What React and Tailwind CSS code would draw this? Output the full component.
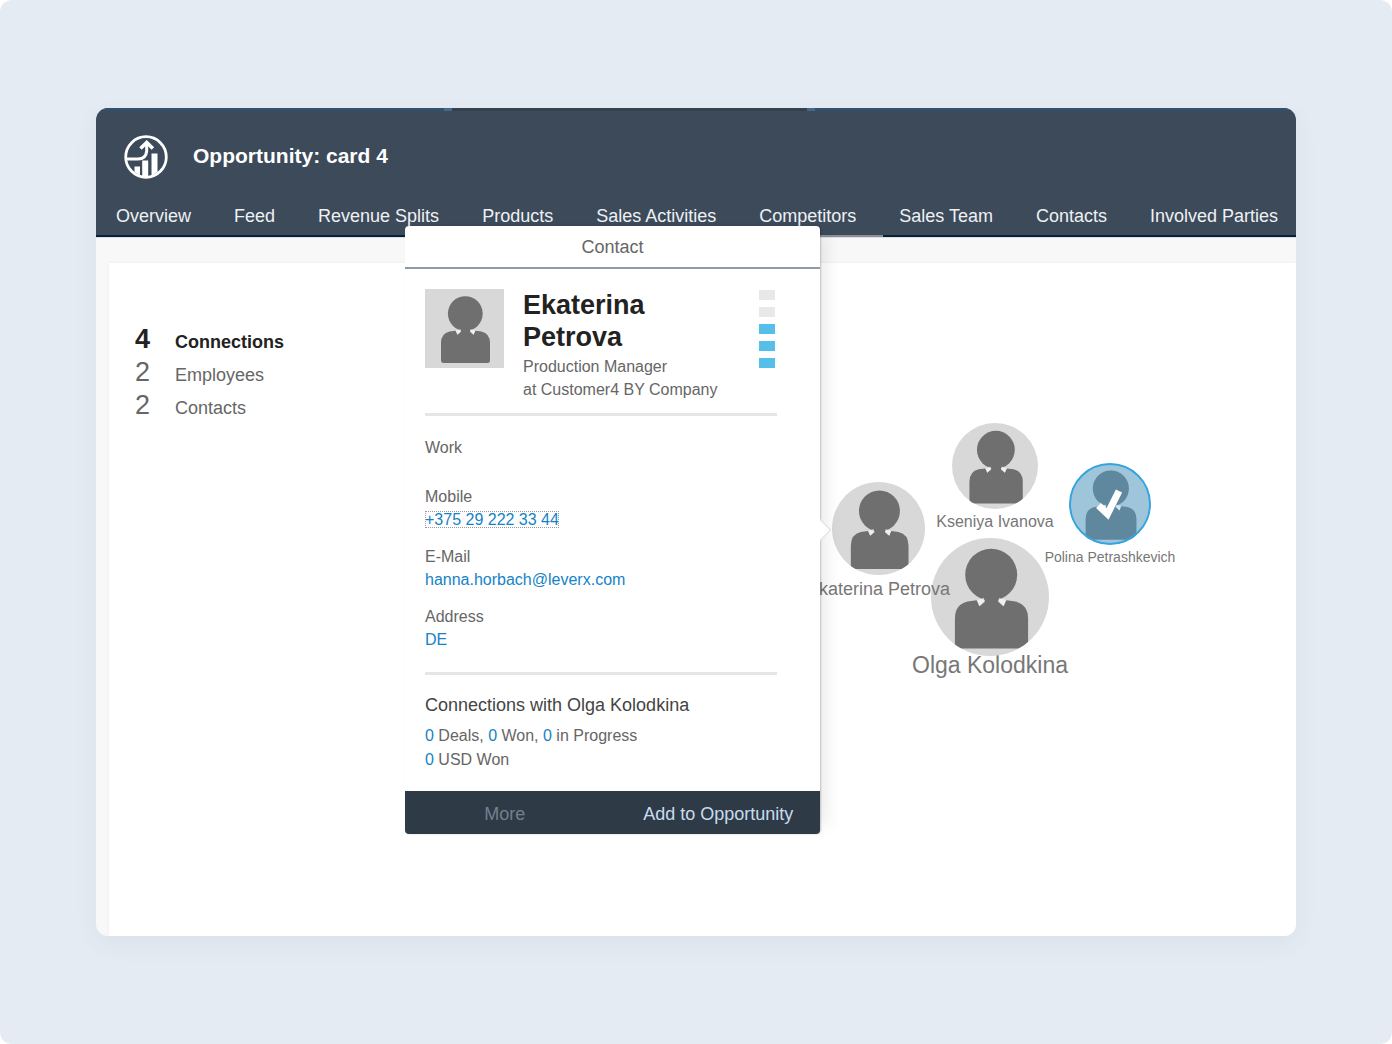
import React, { useState } from "react";
import clsx from "clsx";

const TABS = [
  "Overview",
  "Feed",
  "Revenue Splits",
  "Products",
  "Sales Activities",
  "Competitors",
  "Sales Team",
  "Contacts",
  "Involved Parties",
];

const STATS = [
  { count: 4, label: "Connections" },
  { count: 2, label: "Employees" },
  { count: 2, label: "Contacts" },
];

const PEOPLE = [
  { name: "Olga Kolodkina", pos: "left-[822px] top-[275px]", size: "size-[118px]", text: "-mt-[3px] text-[23px] leading-6" },
  { name: "Kseniya Ivanova", pos: "left-[843px] top-[160px]", size: "size-[86px]", text: "mt-[3px] text-base leading-5" },
  { name: "Ekaterina Petrova", pos: "left-[723px] top-[219px]", size: "size-[93px]", text: "mt-1 text-lg leading-5" },
  { name: "Polina Petrashkevich", pos: "left-[960px] top-[200px]", size: "size-[82px]", text: "mt-[2px] text-sm leading-5", selected: true },
];

export default function App() {
  return (
    <div className="min-h-screen flex flex-col rounded-xl bg-[#e4ebf3] px-24 py-[108px] font-['Liberation_Sans',Arial,sans-serif]">
      <div className="relative flex-1 flex flex-col rounded-xl bg-[#f8f8f8] shadow-[0_8px_24px_rgba(60,80,110,0.06)]">
        <Header />
        <main className="flex-1 flex flex-col border-t border-[#dcdcdc] pt-[25px] pl-[13px] overflow-hidden rounded-b-xl">
          <div className="relative flex-1 bg-white shadow-[0_0_3px_rgba(0,0,0,0.06)]">
            <Stats />
            {PEOPLE.map((p) => (
              <Person key={p.name} {...p} />
            ))}
          </div>
        </main>
        <ContactCard />
      </div>
    </div>
  );
}

function Header() {
  const [active, setActive] = useState("Competitors");

  return (
    <header className="rounded-t-xl overflow-hidden bg-[#3c4a5a] text-[#eef1f4]">
      <div className="flex h-[3px]">
        <div className="w-[348px] bg-[#34516b]" />
        <div className="w-2 bg-[#46698a]" />
        <div className="w-[355px] bg-[#36414e]" />
        <div className="w-2 bg-[#46698a]" />
        <div className="flex-1 bg-[#34516b]" />
      </div>
      <div className="flex items-center gap-[25px] pt-6 pl-7">
        <Logo />
        <h1 className="pb-[2px] text-[21px] leading-7 font-bold text-white">Opportunity: card 4</h1>
      </div>
      <nav className="mt-[25px] flex pl-1 border-b-2 border-[#02233f] whitespace-nowrap">
        {TABS.map((tab) => (
          <a
            key={tab}
            href="#"
            onClick={() => setActive(tab)}
            className={clsx(
              "-mb-[2px] border-b-2 pl-4 pr-[27px] pb-[7px] text-lg leading-6",
              tab === active ? "border-[#8a8f9b]" : "border-transparent"
            )}
          >
            {tab}
          </a>
        ))}
      </nav>
    </header>
  );
}

function Logo() {
  return (
    <svg viewBox="0 0 44 44" className="size-11" fill="none" stroke="#fff" aria-hidden="true">
      <circle cx="22" cy="22" r="20.3" strokeWidth="2.8" />
      <path d="M2.500 24H14q8 0 8.700-8V9" strokeWidth="3" />
      <path d="M16.500 13.500l6.200-6 6.200 6" strokeWidth="3.6" />
      <path d="M10.500 31.500h5.500v9l-5.500-3.500zM18.200 25.500h6v17h-6zM27.500 18.500h6V37l-6 4z" fill="#fff" stroke="none" />
    </svg>
  );
}

function Stats() {
  return (
    <ul className="pt-[60px] pl-[26px] text-lg leading-6 text-[#666]">
      {STATS.map((s, i) => (
        <li key={s.label}>
          <button className={clsx("flex h-[33px] items-baseline", i === 0 && "font-bold text-[#222]")}>
            <span className="w-10 text-left text-[27px] leading-[33px]">{s.count}</span>
            {s.label}
          </button>
        </li>
      ))}
    </ul>
  );
}

function Silhouette({ className }) {
  return (
    <svg viewBox="0 0 79 79" className={className} fill="currentColor" aria-hidden="true">
      <circle cx="40.300" cy="24.600" r="17.400" />
      <path d="M18 74q-2-.5-2-2.500V54q0-9.500 8.500-11.500l6-.8 2 4 3.500-3v-3h9v3l3.500 3 2-4 6 .8q8.500 2 8.500 11.500v17.500q0 2-2 2.500z" />
      <path d="M31 41.500l4.500-1.500v2.500l-3.200 3.200zM50 41.500l-4.500-1.500v2.500l3.200 3.200z" fill="#fff" fillOpacity="0.6" />
    </svg>
  );
}

function Person({ name, pos, size, text, selected }) {
  return (
    <button className={clsx("absolute flex flex-col items-center", pos, size)}>
      <span
        className={clsx(
          "relative shrink-0 rounded-full overflow-hidden",
          size,
          selected ? "bg-[#9fc5da] text-[#5f879d]" : "bg-[#d8d8d8] text-[#6f6f6f]"
        )}
      >
        <Silhouette className="size-full" />
        {selected && (
          <>
            <span className="absolute inset-0 rounded-full border-2 border-[#35a5df]" />
            <svg viewBox="0 0 82 82" className="absolute inset-0 size-full" fill="none" aria-hidden="true">
              <path d="M29.500 42.500l9 8.500 11.500-23" stroke="#fff" strokeWidth="7" />
            </svg>
          </>
        )}
      </span>
      <span className={clsx("whitespace-nowrap text-[#777]", text)}>{name}</span>
    </button>
  );
}

function Field({ label, children }) {
  return (
    <div>
      <dt>{label}</dt>
      <dd className="text-[#1583c6]">{children}</dd>
    </div>
  );
}

function ContactCard() {
  return (
    <section
      aria-label="Contact"
      className="absolute left-[309px] top-[118px] w-[415px] rounded-sm bg-white shadow-[1px_0_2px_rgba(0,0,0,0.2),16px_0_14px_-8px_rgba(0,0,0,0.07)]"
    >
      {/* arrow to the selected person */}
      <span className="absolute -right-2 top-[296px] size-4 rotate-45 border-t border-r border-[#dedede] bg-white" />
      <h2 className="relative border-b-2 border-[#8b9cad] pt-[2px] text-center text-lg leading-[39px] text-[#666]">Contact</h2>

      <div className="relative bg-white pt-5 pl-5 pr-[43px] text-base leading-[23px] text-[#666]">
        <div className="flex border-b-[3px] border-[#e6e6e6] pb-3">
          <div className="size-[79px] bg-[#d8d8d8] text-[#6f6f6f]">
            <Silhouette className="size-full" />
          </div>
          <div className="ml-[19px] flex-1 whitespace-nowrap">
            <h3 className="text-[27px] leading-8 font-bold text-[#222]">
              Ekaterina
              <br />
              Petrova
            </h3>
            <p className="mt-[2px]">
              Production Manager
              <br />
              at Customer4 BY Company
            </p>
          </div>
          <Rating value={3} />
        </div>

        <h4 className="mt-5">Work</h4>
        <dl className="mt-[26px] flex flex-col gap-[14px] border-b-[3px] border-[#e6e6e6] pb-[21px]">
          <Field label="Mobile">
            <a href="tel:+375292223344" className="outline-1 -outline-offset-1 outline-dotted outline-[#999]">
              +375 29 222 33 44
            </a>
          </Field>
          <Field label="E-Mail">
            <a href="mailto:hanna.horbach@leverx.com">hanna.horbach@leverx.com</a>
          </Field>
          <Field label="Address">
            <a href="#">DE</a>
          </Field>
        </dl>

        <h4 className="mt-[18px] text-lg leading-6 text-[#444]">Connections with Olga Kolodkina</h4>
        <p className="mt-[7px] pb-[19px] leading-6">
          <Num>0</Num> Deals, <Num>0</Num> Won, <Num>0</Num> in Progress
          <br />
          <Num>0</Num> USD Won
        </p>
      </div>

      <footer className="relative grid grid-cols-2 rounded-b-sm bg-[#2e3a46] pt-[3px] text-lg leading-10">
        <button className="pr-2 text-[#72808f]">More</button>
        <button className="pl-1 text-[#c9dcee]">Add to Opportunity</button>
      </footer>
    </section>
  );
}

function Num({ children }) {
  return <span className="text-[#1583c6]">{children}</span>;
}

function Rating({ value }) {
  return (
    <div className="flex flex-col gap-[7px] pt-[1px] pr-[2px]">
      {[5, 4, 3, 2, 1].map((n) => (
        <span key={n} className={clsx("h-[10px] w-4", n <= value ? "bg-[#55bfe9]" : "bg-[#e8e8e8]")} />
      ))}
    </div>
  );
}
